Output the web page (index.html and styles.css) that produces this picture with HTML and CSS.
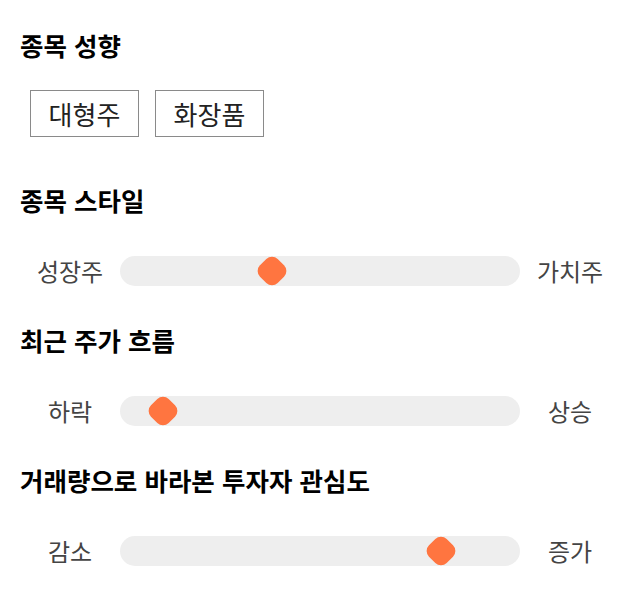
FILE: index.html
```html
<!DOCTYPE html>
<html lang="ko">
<head>
<meta charset="utf-8">
<title>종목 정보</title>
<link rel="stylesheet" href="styles.css">
</head>
<body>
<main class="panel">
  <section class="group">
    <h2 class="title">종목 성향</h2>
    <div class="tags">
      <span class="tag">대형주</span>
      <span class="tag">화장품</span>
    </div>
  </section>
  <section class="group">
    <h2 class="title">종목 스타일</h2>
    <div class="slider-row">
      <span class="label">성장주</span>
      <div class="track"><span class="thumb" style="left:38%"></span></div>
      <span class="label">가치주</span>
    </div>
  </section>
  <section class="group">
    <h2 class="title">최근 주가 흐름</h2>
    <div class="slider-row">
      <span class="label">하락</span>
      <div class="track"><span class="thumb" style="left:10.75%"></span></div>
      <span class="label">상승</span>
    </div>
  </section>
  <section class="group">
    <h2 class="title">거래량으로 바라본 투자자 관심도</h2>
    <div class="slider-row">
      <span class="label">감소</span>
      <div class="track"><span class="thumb" style="left:80.25%"></span></div>
      <span class="label">증가</span>
    </div>
  </section>
</main>
</body>
</html>
```
FILE: styles.css
```css
html, body {
  margin: 0;
  padding: 0;
  background: #ffffff;
}
body {
  font-family: "Noto Sans CJK KR", "Noto Sans", sans-serif;
  color: #000;
}
.panel {
  padding: 28px 20px 20px;
  display: flex;
  flex-direction: column;
}
.title {
  margin: 0;
  font-size: 25.5px;
  line-height: 34px;
  font-weight: 700;
  color: #000;
}
.tags {
  display: flex;
  gap: 16px;
  padding: 28px 10px 0;
}
.tag {
  display: flex;
  align-items: center;
  justify-content: center;
  width: 107px;
  height: 45px;
  border: 1px solid #8a8a8a;
  font-size: 26px;
  color: #222;
}
.group + .group {
  margin-top: 38px;
}
.group:nth-child(2) {
  margin-top: 46px;
}
.slider-row {
  display: grid;
  grid-template-columns: 100px 400px 100px;
  align-items: center;
  margin-top: 39px;
}
.group:nth-child(n+3) .slider-row {
  margin-top: 39px;
}
.label {
  text-align: center;
  font-size: 24px;
  line-height: 30px;
  color: #444;
}
.track {
  position: relative;
  height: 30px;
  background: #eeeeee;
  border-radius: 15px;
}
.thumb {
  position: absolute;
  top: 50%;
  width: 25px;
  height: 25px;
  background: #ff7540;
  border-radius: 8px;
  transform: translate(-50%, -50%) rotate(45deg);
}
.group:nth-child(n+3) {
  margin-top: 37px;
}
```
